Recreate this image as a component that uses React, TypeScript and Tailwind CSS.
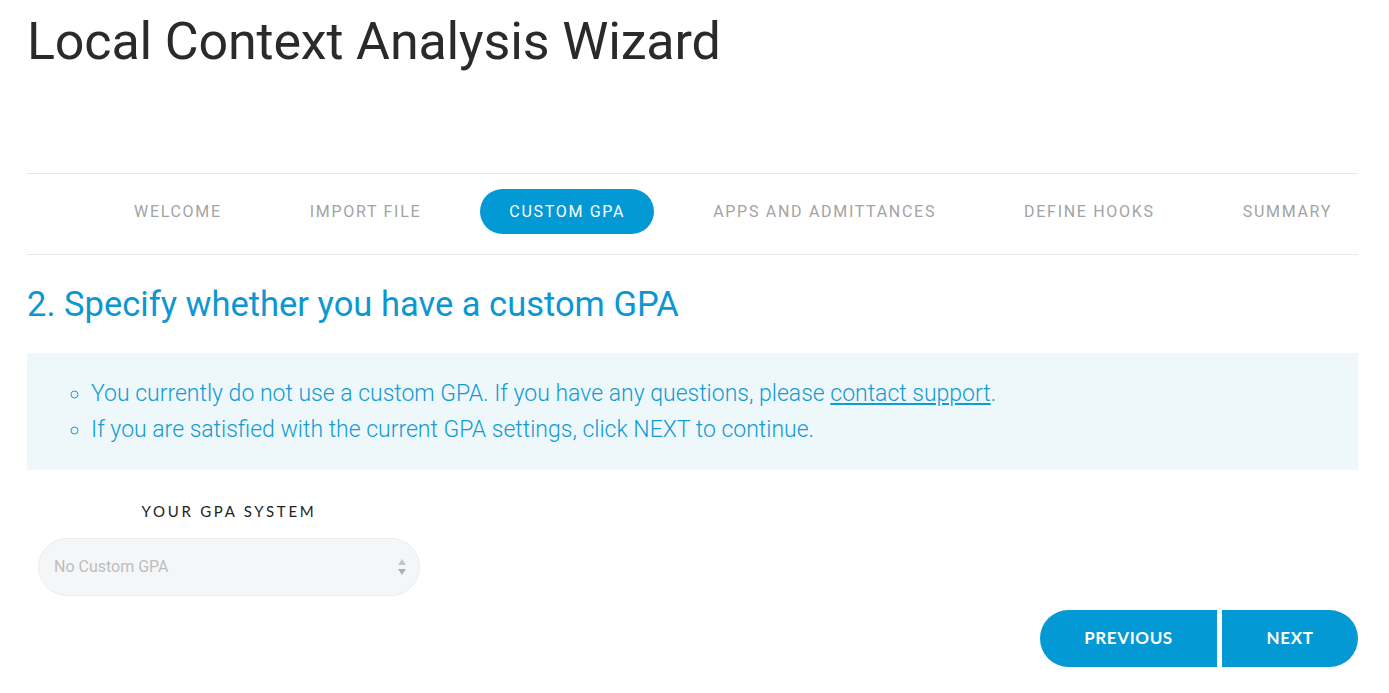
import React from 'react';

const steps = ['WELCOME', 'IMPORT FILE', 'CUSTOM GPA', 'APPS AND ADMITTANCES', 'DEFINE HOOKS', 'SUMMARY'];

export default function App() {
  return (
    <div className="min-h-screen bg-white pl-[27px] pr-[31px] pt-[10px] font-['Roboto',sans-serif]">
      <h1 className="text-[52px] leading-[64px] font-normal text-[#2a2a2a] tracking-[-0.15px]">Local Context Analysis Wizard</h1>

      <nav className="mt-[99px] border-y border-[#e8e8e8] h-[82px] flex items-start gap-[30px] pl-[78px] pt-[15px]">
        {steps.map(step => (
          <div
            key={step}
            className={`h-[45px] shrink-0 whitespace-nowrap flex items-center rounded-full px-[29px] text-[16px] tracking-[1.7px] ${step === 'CUSTOM GPA' ? 'bg-[#0399d4] text-white' : 'text-[#a3a3a3]'}`}
          >
            {step}
          </div>
        ))}
      </nav>

      <h2 className="mt-[27px] text-[34.5px] leading-[44px] text-[#0d97d1]">2. Specify whether you have a custom GPA</h2>

      <div className="mt-[27px] bg-[#eef8fb] pl-[42px] pt-[23px] pb-[22px] text-[23px] font-light text-[#129bd3] leading-[36px]">
        <ul className="list-[circle] pl-[22px] marker:text-[#129bd3] marker:text-[22px]">
          <li>
            You currently do not use a custom GPA. If you have any questions, please{' '}
            <a href="#" className="underline">contact support</a>.
          </li>
          <li>If you are satisfied with the current GPA settings, click NEXT to continue.</li>
        </ul>
      </div>

      <div className="w-[382px] ml-[11px] mt-[30px]">
        <div className="text-center text-[15px] tracking-[2.7px] text-[#222] font-['Lato',sans-serif] font-normal">YOUR GPA SYSTEM</div>
        <div className="mt-[15px] h-[58px] rounded-full bg-[#f5f6f8] border border-[#ececec] flex items-center justify-between pl-[15px] pr-[12px]">
          <span className="text-[16px] text-[#bdbdbd]">No Custom GPA</span>
          <svg width="10" height="18" viewBox="0 0 10 18">
            <path d="M5 1 L9 7 L1 7 Z" fill="#c4c4c4" />
            <path d="M5 17 L9 11 L1 11 Z" fill="#b0b0b0" />
          </svg>
        </div>
      </div>

      <div className="mt-[14px] flex justify-end gap-[5px]">
        <button className="h-[57px] w-[177px] rounded-l-full bg-[#0399d4] text-white text-[17px] font-bold tracking-[0.6px] font-['Lato',sans-serif]">PREVIOUS</button>
        <button className="h-[57px] w-[136px] rounded-r-full bg-[#0399d4] text-white text-[17px] font-bold tracking-[0.6px] font-['Lato',sans-serif]">NEXT</button>
      </div>
    </div>
  );
}
